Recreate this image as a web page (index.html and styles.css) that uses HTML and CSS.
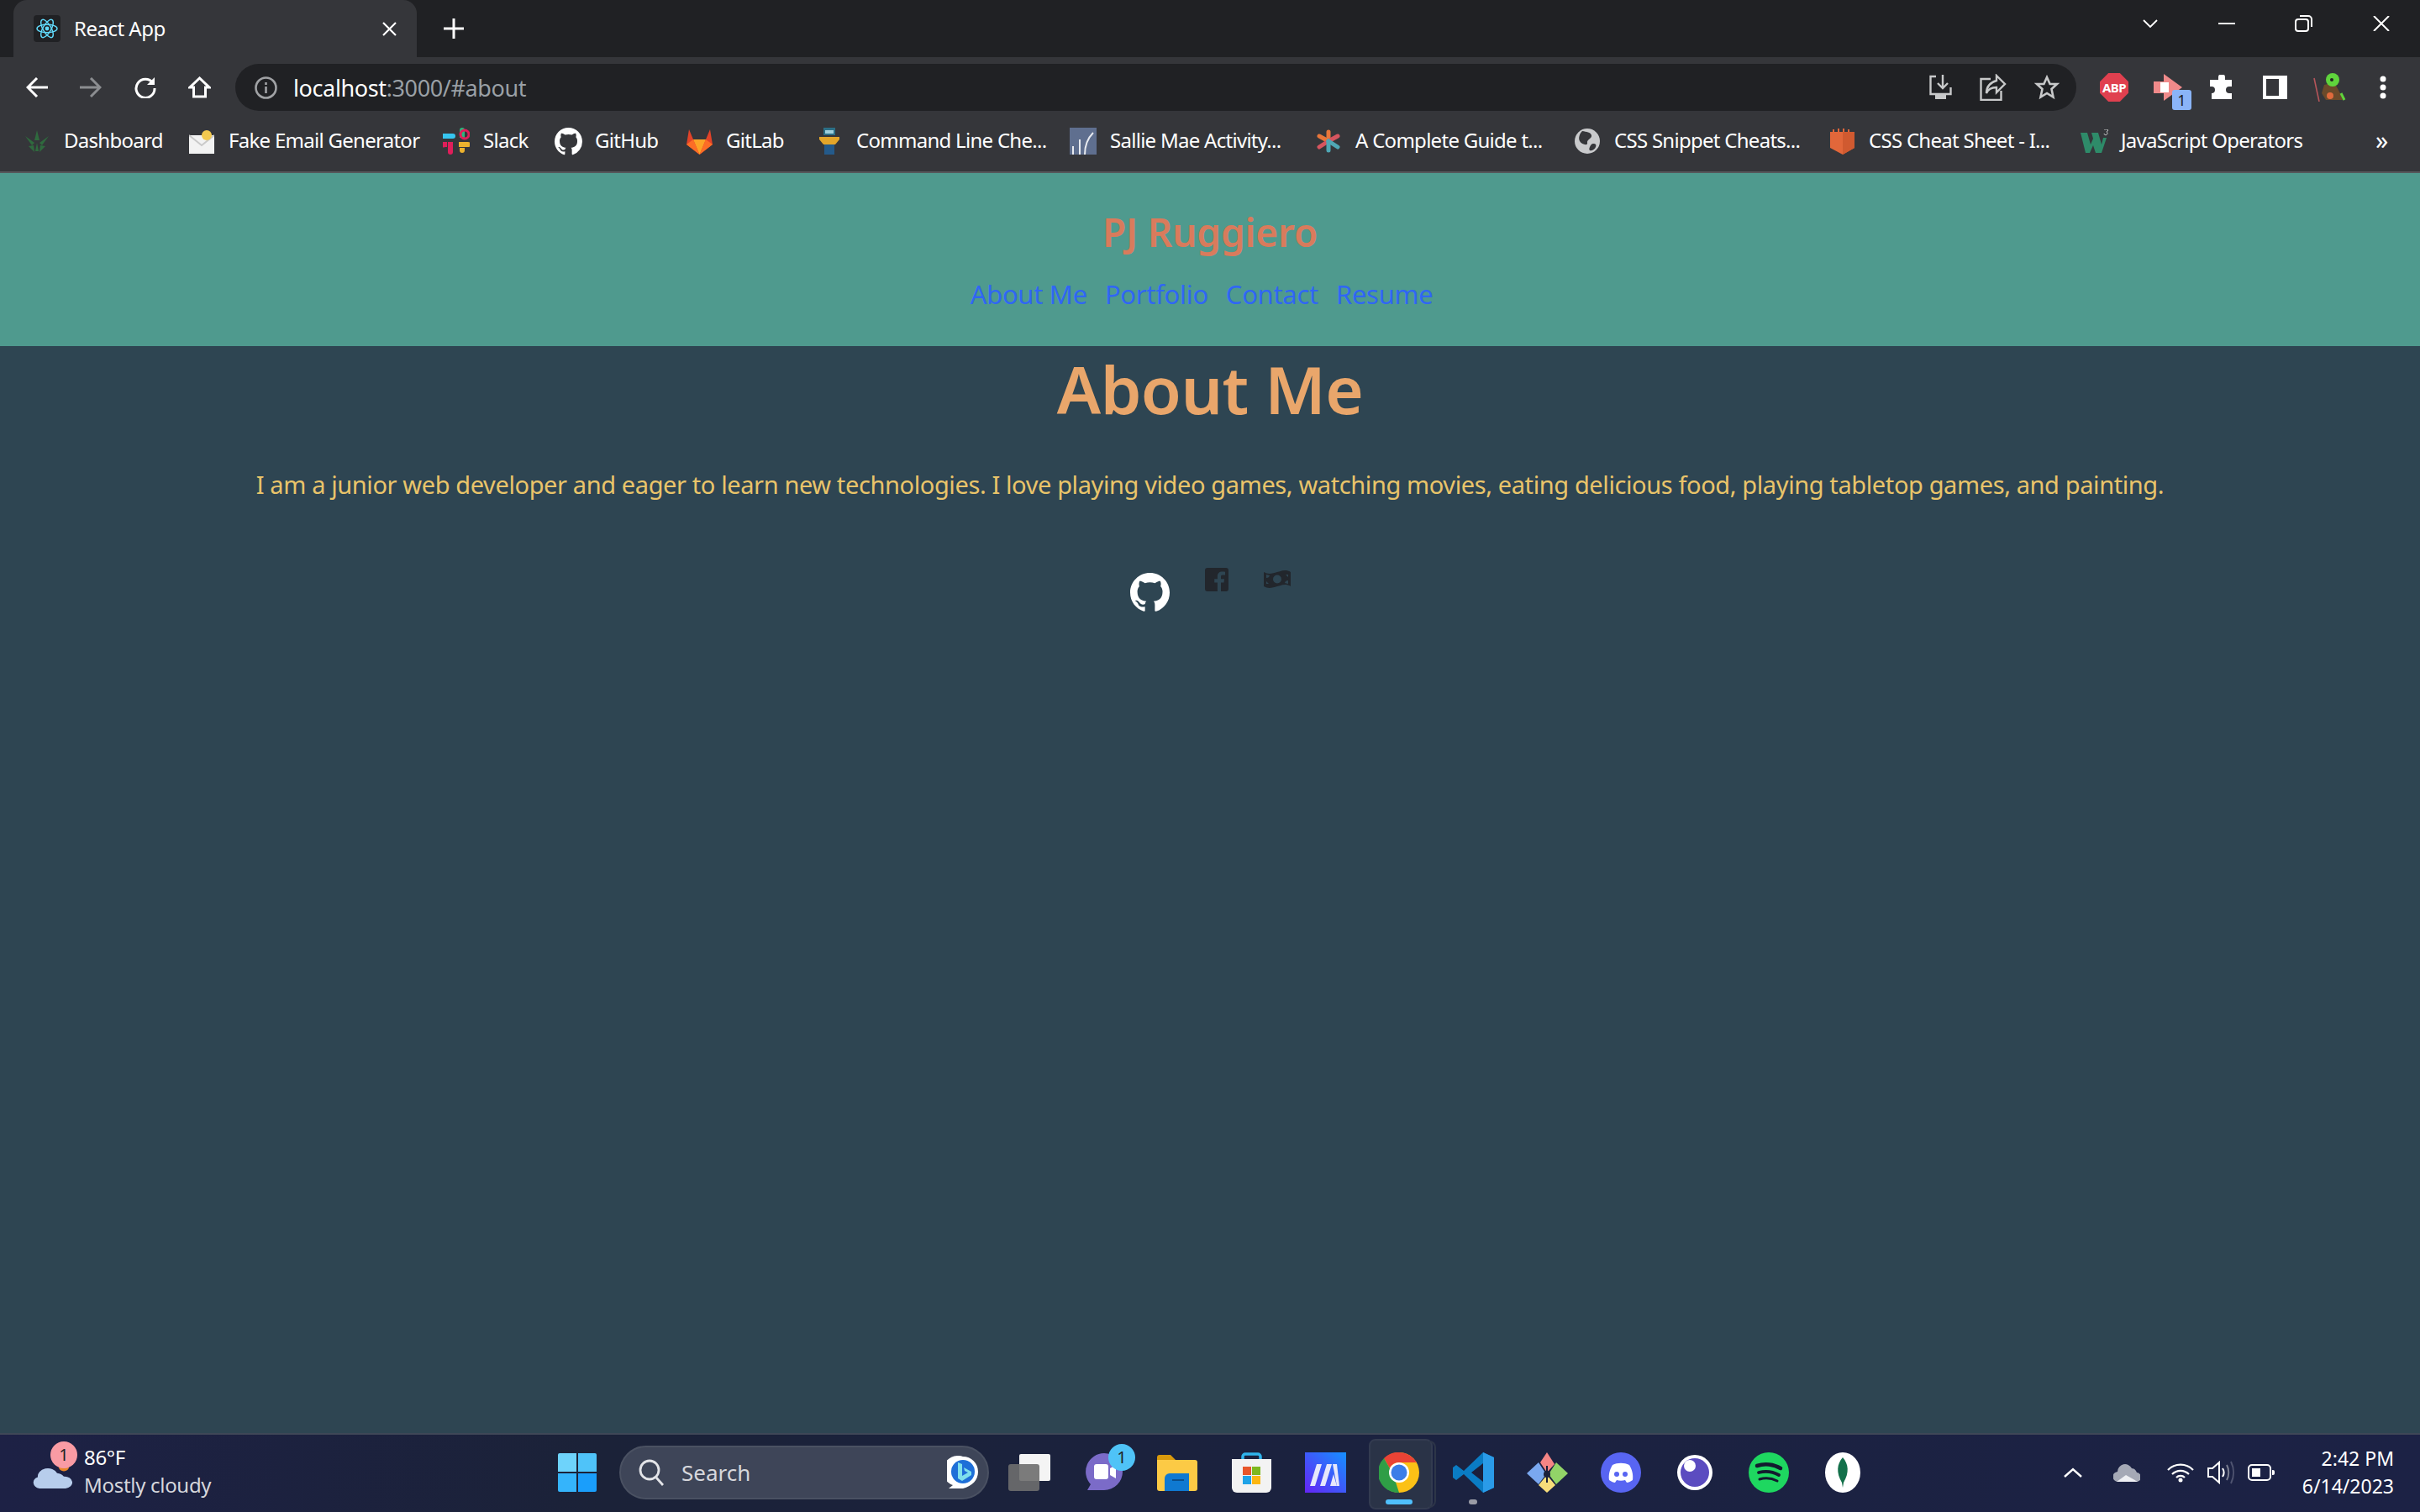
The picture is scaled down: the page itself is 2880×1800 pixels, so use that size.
FILE: index.html
```html
<!DOCTYPE html>
<html lang="en">
  <head>
    <meta charset="UTF-8" />
    <meta name="viewport" content="width=device-width, initial-scale=1.0" />
    <title>React App</title>
    <link rel="stylesheet" href="styles.css">
  </head>
  <body>
    <div class="tabstrip">
      <div class="tab">
        <span class="favicon">
          <svg width="26" height="26" viewBox="0 0 26 26" fill="none" stroke="#61dafb" stroke-width="1.4">
            <ellipse cx="13" cy="13" rx="12" ry="4.8" />
            <ellipse cx="13" cy="13" rx="12" ry="4.8" transform="rotate(60 13 13)" />
            <ellipse cx="13" cy="13" rx="12" ry="4.8" transform="rotate(120 13 13)" />
            <circle cx="13" cy="13" r="2.4" fill="#61dafb" stroke="none" />
          </svg>
        </span>
        <span class="tab-title">React App</span>
        <svg class="tab-close" width="17" height="17" viewBox="0 0 17 17" stroke="#fff" stroke-width="2.2"><path d="M1 1l15 15M16 1L1 16" /></svg>
      </div>
      <svg class="new-tab" width="24" height="24" viewBox="0 0 24 24" stroke="#fff" stroke-width="3"><path d="M12 0v24M0 12h24" /></svg>
      <div class="window-btns">
        <svg class="win-chevron" width="18" height="10" viewBox="0 0 18 10" fill="none" stroke="#fff" stroke-width="1.8"><path d="M1 1l8 8 8-8" /></svg>
        <svg class="win-min" width="20" height="2" viewBox="0 0 20 2" stroke="#fff" stroke-width="2"><path d="M0 1h20" /></svg>
        <svg class="win-restore" width="21" height="20" viewBox="0 0 21 20" fill="none" stroke="#fff" stroke-width="2"><rect x="1" y="5" width="15" height="14" rx="3" /><path d="M6 1h10a4 4 0 014 4v9" /></svg>
        <svg class="win-close" width="20" height="18" viewBox="0 0 20 18" stroke="#fff" stroke-width="2"><path d="M1 0l18 18M19 0L1 18" /></svg>
      </div>
    </div>

    <div class="toolbar">
      <div class="nav-btns">
        <svg width="26" height="24" viewBox="0 0 26 24" fill="none" stroke="#fff" stroke-width="3"><path d="M26 12H3M13 1L2 12l11 11" /></svg>
        <svg width="26" height="24" viewBox="0 0 26 24" fill="none" stroke="#8b8d90" stroke-width="3"><path d="M0 12h23M13 1l11 11-11 11" /></svg>
        <svg width="27" height="26" viewBox="0 0 27 26" fill="none" stroke="#fff" stroke-width="3"><path d="M23 8a11 11 0 10 2 6" /><path d="M25 1v9h-9" fill="#fff" stroke="none" /></svg>
        <svg width="27" height="26" viewBox="0 0 27 26" fill="none" stroke="#fff" stroke-width="3"><path d="M13.500 2L2 13h4.500v11h14V13H25z" /></svg>
      </div>
      <div class="omnibox">
        <svg class="info-icon" width="27" height="27" viewBox="0 0 27 27" fill="none" stroke="#a0a2a5" stroke-width="2.600"><circle cx="13.500" cy="13.500" r="12" /><path d="M13.500 12v8M13.500 7v3" /></svg>
        <span class="url"><span class="url-host">localhost</span>:3000/#about</span>
        <div class="omni-actions">
          <svg width="27" height="32" viewBox="0 0 27 32" fill="none" stroke="#c8c9ca" stroke-width="2.400"><path d="M8 3H1.500v21h24V16M16 1v15M10 11l6 6 6-6" /><path d="M7 25h13v5H7z" fill="#c8c9ca" stroke="none" /></svg>
          <svg width="32" height="32" viewBox="0 0 32 32" fill="none" stroke="#c8c9ca" stroke-width="2.400"><path d="M13 6H1.500v25h24V20" /><path d="M20 2l10 10-10 10v-6c-6 0-10 2-12 7 0-8 5-13 12-15z" /></svg>
          <svg width="30" height="30" viewBox="0 0 30 30" fill="none" stroke="#c8c9ca" stroke-width="2.600"><path d="M15 3l3.600 8h8.400l-6.500 6 2 9.500-7.500-4.500-7.500 4.500 2-9.500-6.500-6h8.400z" /></svg>
        </div>
      </div>
      <div class="ext-btns">
        <span class="ext ext-abp">ABP</span>
        <span class="ext ext-rec">
          <svg width="34" height="32" viewBox="0 0 34 32"><path d="M0 9h12v14H0z" fill="#f08a8a" /><path d="M12 0l22 16-22 16z" fill="#f08a8a" /><path d="M8 10h10v12H8z" fill="#fff" /></svg>
          <span class="ext-badge">1</span>
        </span>
        <svg class="ext" width="30" height="30" viewBox="0 0 30 30" fill="#fff"><path d="M11 3a4 4 0 018 0v3h8v8h-3a4 4 0 000 8h3v7H3v-7a4 4 0 000-8H1V6h10z" /></svg>
        <svg class="ext" width="29" height="28" viewBox="0 0 29 28" fill="none" stroke="#fff" stroke-width="4"><rect x="2" y="2" width="25" height="24" /><path d="M19 2h8v24h-8z" fill="#fff" stroke="none" /></svg>
        <svg class="ext" width="43" height="34" viewBox="0 0 43 34"><path d="M16 14l12-3 8 15 2 6H18l-5-8z" fill="#6b4a2a" /><ellipse cx="26" cy="8" rx="8" ry="8" fill="#5fd43c" /><circle cx="25" cy="8" r="2" fill="#222" /><circle cx="23" cy="27" r="4" fill="#e06a3c" /><path d="M4 6l6 28" stroke="#b5555a" stroke-width="1.600" /><path d="M36 24l4 8" stroke="#5fd43c" stroke-width="3" /></svg>
        <svg class="ext" width="8" height="28" viewBox="0 0 8 28" fill="#fff"><circle cx="4" cy="4" r="3.500" /><circle cx="4" cy="14" r="3.500" /><circle cx="4" cy="24" r="3.500" /></svg>
      </div>
    </div>

    <div class="bookmarks">
      <a class="bm">
        <span class="bm-icon"><svg width="32" height="28" viewBox="0 0 32 28" fill="#2f6a3e"><path d="M16 1l3 12h-6zM2 8l11 8-3 3zM30 8l-11 8 3 3zM6 20l6-1 1 8zM26 20l-6-1-1 8zM16 16l2 10h-4z" /></svg></span>
        <span>Dashboard</span>
      </a>
      <a class="bm">
        <span class="bm-icon"><svg width="30" height="30" viewBox="0 0 30 30"><path d="M0 8h30v22H0z" fill="#f2f2f2" /><path d="M0 8l15 12L30 8" fill="none" stroke="#c9c9c9" stroke-width="2" /><circle cx="21" cy="8" r="6" fill="#f3c94f" /></svg></span>
        <span>Fake Email Generator</span>
      </a>
      <a class="bm">
        <span class="bm-icon"><svg width="32" height="32" viewBox="0 0 32 32">
          <path d="M2 12h11a3 3 0 000-6H2a3 3 0 000 6z" fill="#36c5f0" transform="translate(-1 1)" />
          <path d="M20 3a3 3 0 016 0v9h-6z" fill="#2eb67d" />
          <circle cx="26" cy="8" r="5" fill="none" stroke="#e01e5a" stroke-width="3" />
          <path d="M19 17h11a3 3 0 010 6H19z" fill="#ecb22e" />
          <path d="M20 24h6v3a3 3 0 01-6 0z" fill="#ecb22e" />
          <path d="M6 17h6v12a3 3 0 01-6 0z" fill="#e01e5a" />
          <path d="M0 17h5v6H3a3 3 0 01-3-6z" fill="#e01e5a" />
        </svg></span>
        <span>Slack</span>
      </a>
      <a class="bm">
        <span class="bm-icon"><svg width="33" height="33" viewBox="0 0 16 16" fill="#fff"><use href="#gh-mark" /></svg></span>
        <span>GitHub</span>
      </a>
      <a class="bm">
        <span class="bm-icon"><svg width="33" height="31" viewBox="0 0 33 31"><path d="M16.500 31L1 19 4 1l5 12h15l5-12 3 18z" fill="#e24329" /><path d="M16.500 31L9 13h15z" fill="#fca326" /><path d="M16.500 31L1 19l8-6zM16.500 31L32 19l-8-6z" fill="#fc6d26" /></svg></span>
        <span>GitLab</span>
      </a>
      <a class="bm">
        <span class="bm-icon"><svg width="24" height="32" viewBox="0 0 24 32"><path d="M5 0h14v9H5z" fill="#2c6f86" /><path d="M7 3h10v4H7z" fill="#9fd0dd" /><path d="M0 11h24v3l-5 6H5l-5-6z" fill="#e3a529" /><path d="M6 20h12v12H6z" fill="#245a8a" /></svg></span>
        <span>Command Line Che...</span>
      </a>
      <a class="bm">
        <span class="bm-icon"><svg width="32" height="32" viewBox="0 0 32 32"><path d="M0 0h32v32H0z" fill="#5f6f8f" /><path d="M4 32V22M12 32V14M18 32c0-12 4-20 10-26" fill="none" stroke="#e8ebf0" stroke-width="2" /></svg></span>
        <span>Sallie Mae Activity...</span>
      </a>
      <a class="bm">
        <span class="bm-icon"><svg width="28" height="28" viewBox="0 0 28 28" stroke-width="5" stroke-linecap="round"><path d="M14 3v10" stroke="#e8763a" /><path d="M3 8l11 6" stroke="#e8763a" /><path d="M25 8l-11 6" stroke="#d6555f" /><path d="M3 21l11-7" stroke="#d6555f" /><path d="M25 21l-11-7" stroke="#4fa7b5" /><path d="M14 25V14" stroke="#4fa7b5" /></svg></span>
        <span>A Complete Guide t...</span>
      </a>
      <a class="bm">
        <span class="bm-icon"><svg width="30" height="30" viewBox="0 0 30 30"><circle cx="15" cy="15" r="15" fill="#c9cacc" /><path d="M9 3c5 1 10 1 11 5s-6 5-5 9-7 2-9-2 0-9 3-12zM22 18c3 0 4 1 3 4s-5 5-7 4 1-8 4-8z" fill="#35363a" /></svg></span>
        <span>CSS Snippet Cheats...</span>
      </a>
      <a class="bm">
        <span class="bm-icon"><svg width="29" height="32" viewBox="0 0 29 32"><path d="M0 5h29v19l-14 8-15-8z" fill="#e2673a" /><path d="M15 5h14v19l-14 8z" fill="#d05a30" /><path d="M4 5V2M10 5V1M16 5V1M22 5V2" stroke="#e2673a" stroke-width="2" /></svg></span>
        <span>CSS Cheat Sheet - I...</span>
      </a>
      <a class="bm">
        <span class="bm-icon"><svg width="33" height="28" viewBox="0 0 33 28"><path d="M0 4h8l4 14 3-7-2-7h8l4 14 2-8h4l-6 18h-7l-3-9-4 9H6z" fill="#2e8b69" /><path d="M28 0h5v1l-2 2a2 2 0 11-3 2" fill="none" stroke="#cfd0d0" stroke-width="1" /></svg></span>
        <span>JavaScript Operators</span>
      </a>
      <span class="bm-more">»</span>
    </div>

    <div class="page">
      <header class="site-header">
        <h2 class="site-title">PJ Ruggiero</h2>
        <nav class="site-nav">
          <a href="#about">About Me</a>
          <a href="#portfolio">Portfolio</a>
          <a href="#contact">Contact</a>
          <a href="#resume">Resume</a>
        </nav>
      </header>
      <main class="about">
        <h1>About Me</h1>
        <p>I am a junior web developer and eager to learn new technologies. I love playing video games, watching movies, eating delicious food, playing tabletop games, and painting.</p>
        <div class="socials">
          <svg class="social-gh" width="47" height="47" viewBox="0 0 16 16" fill="#fff">
            <path id="gh-mark" d="M8 0C3.580 0 0 3.580 0 8c0 3.540 2.290 6.530 5.470 7.590.400.070.550-.170.550-.380 0-.190-.010-.820-.010-1.490-2.010.370-2.530-.490-2.690-.940-.090-.230-.480-.940-.820-1.130-.280-.150-.680-.520-.010-.530.630-.010 1.080.580 1.230.820.720 1.210 1.870.870 2.330.660.070-.520.280-.870.510-1.070-1.780-.200-3.640-.890-3.640-3.950 0-.870.310-1.590.820-2.150-.080-.200-.360-1.020.080-2.120 0 0 .670-.210 2.200.820.640-.180 1.320-.270 2-.270.680 0 1.360.090 2 .270 1.530-1.040 2.200-.820 2.200-.820.440 1.100.160 1.920.080 2.120.510.560.820 1.270.820 2.150 0 3.070-1.870 3.750-3.650 3.950.290.250.540.730.540 1.480 0 1.070-.010 1.930-.010 2.200 0 .210.150.460.550.380A8.013 8.013 0 0016 8c0-4.420-3.580-8-8-8z" />
          </svg>
          <svg width="28" height="28" viewBox="0 0 28 28"><path d="M3 0h22a3 3 0 013 3v22a3 3 0 01-3 3h-6V17.500h3.500l.6-4.300H19v-2.600c0-1.300.5-2 2.100-2H24V4.800c-.8-.1-2-.3-3.500-.3-3.300 0-5.600 2-5.600 5.600v3.100h-3.700v4.300h3.700V28H3a3 3 0 01-3-3V3a3 3 0 013-3z" fill="#22262c" /></svg>
          <svg class="social-money" width="32" height="21" viewBox="0 0 32 21"><path fill-rule="evenodd" d="M0 2c5 3 10 2 16 0s11-3 16 0v17c-5-3-10-2-16 0s-11 3-16 0zM16 5.500a5 5 0 100 10 5 5 0 000-10zM3 5v4a4 4 0 004-3zM29 16v-4a4 4 0 00-4 3zM3 16v-3l3 3zM29 5v3l-3-3z" fill="#22262c" /></svg>
        </div>
      </main>
    </div>

    <footer class="taskbar">
      <div class="weather">
        <span class="weather-icon">
          <svg width="48" height="30" viewBox="0 0 48 38" preserveAspectRatio="none"><circle cx="38" cy="6" r="6" fill="#e8862a" /><path d="M9 38a9 9 0 01-2-17 12 12 0 0123-6 11 11 0 018 5 9 9 0 012 18z" fill="#b7cdec" /></svg>
          <span class="weather-badge">1</span>
        </span>
        <div class="weather-text">
          <span class="temp">86°F</span>
          <span class="cond">Mostly cloudy</span>
        </div>
      </div>
      <div class="task-center">
        <svg class="start" width="46" height="46" viewBox="0 0 46 46"><path d="M2 0h20v22H0V2a2 2 0 012-2z" fill="#6ed3fb" /><path d="M24 0h20a2 2 0 012 2v20H24z" fill="#4fc3f9" /><path d="M0 24h22v22H2a2 2 0 01-2-2z" fill="#35b4fb" /><path d="M24 24h22v20a2 2 0 01-2 2H24z" fill="#1a9efb" /></svg>
        <div class="task-search">
          <svg width="30" height="32" viewBox="0 0 30 32" fill="none" stroke="#e3e4e8" stroke-width="2.800"><circle cx="13" cy="13" r="11" /><path d="M21 22l8 9" /></svg>
          <span>Search</span>
          <svg class="bing" width="38" height="40" viewBox="0 0 38 40"><path d="M19 1a18 18 0 0118 18c0 10-7 17-18 20H2l5-4a18 18 0 0112-34z" fill="#fff" /><circle cx="19" cy="19" r="14" fill="#1e6fd8" /><path d="M13 8l5 2v14l7-4-4-2-1-4 9 5v4l-11 7-5-3z" fill="#7fe0ec" /></svg>
        </div>
        <div class="task-apps">
          <span class="app">
            <svg width="50" height="44" viewBox="0 0 50 44"><rect x="13" y="0" width="37" height="32" rx="2" fill="#f4f4f4" /><rect x="0" y="12" width="37" height="32" rx="3" fill="#6e6e6e" fill-opacity=".9" /></svg>
          </span>
          <span class="app">
            <svg width="47" height="46" viewBox="0 0 47 46"><path d="M24 0a22 22 0 010 44H4l4-7A22 22 0 0124 0z" fill="#7b6bc8" /><rect x="12" y="13" width="17" height="18" rx="3" fill="#fff" /><path d="M31 18l7-4v16l-7-4z" fill="#fff" /></svg>
            <span class="app-badge">1</span>
          </span>
          <span class="app">
            <svg width="48" height="43" viewBox="0 0 48 43"><path d="M0 3a3 3 0 013-3h13l6 6H0z" fill="#d99a0c" /><path d="M0 6h45a3 3 0 013 3v31a3 3 0 01-3 3H3a3 3 0 01-3-3z" fill="#fcca45" /><path d="M9 28a6 6 0 016-6h23v21H9z" fill="#0f79d1" /><path d="M18 30h14" stroke="#0a4f8c" stroke-width="2" /></svg>
          </span>
          <span class="app">
            <svg width="47" height="48" viewBox="0 0 47 48"><path d="M13 12V5a3 3 0 013-3h15a3 3 0 013 3v7" fill="none" stroke="#2fb4ec" stroke-width="3.500" /><path d="M0 8h47v34a6 6 0 01-6 6H6a6 6 0 01-6-6z" fill="#f3f3f3" /><path d="M13 17h10v10H13z" fill="#e8562a" /><path d="M24 17h10v10H24z" fill="#7eb81f" /><path d="M13 28h10v10H13z" fill="#1fa3e8" /><path d="M24 28h10v10H24z" fill="#fcb713" /></svg>
          </span>
          <span class="app">
            <svg width="49" height="48" viewBox="0 0 49 48"><defs><linearGradient id="mail-grad" x1="1" y1="0" x2="0" y2="1"><stop offset="0" stop-color="#1590ff" /><stop offset="1" stop-color="#6524f5" /></linearGradient></defs><rect width="49" height="48" fill="url(#mail-grad)" /><path d="M6 40l8-26h6l-8 26zM18 40l8-26h6l-8 26zM30 40l4-14 4 14z" fill="#e6e8fb" /><path d="M33 14h5l3 26h-3z" fill="#e6e8fb" /></svg>
          </span>
          <span class="app app-active">
            <svg width="48" height="48" viewBox="0 0 48 48"><circle cx="24" cy="24" r="24" fill="#fbc116" /><path d="M24 0a24 24 0 0121 12H24a12 12 0 00-11 7L6 7A24 24 0 0124 0z" fill="#ea4335" /><path d="M6 7l11 19 7 22A24 24 0 016 7z" fill="#2f9e46" /><circle cx="24" cy="24" r="12" fill="#fff" /><circle cx="24" cy="24" r="9.500" fill="#3b7de8" /></svg>
            <span class="app-underline"></span>
          </span>
          <span class="app">
            <svg width="49" height="48" viewBox="0 0 49 48"><path d="M36 0l13 6v36l-13 6L13 26 4 33l-4-3V18l4-3 9 7z" fill="#0a7cc4" /><path d="M36 0l13 6v36l-13 6z" fill="#2a9be8" /><path d="M36 13L22 24l14 11z" fill="#1b1f3a" /></svg>
            <span class="app-dot"></span>
          </span>
          <span class="app">
            <svg width="49" height="48" viewBox="0 0 49 48"><path d="M24 0l9 14-9 10-8-12z" fill="#f58585" /><path d="M35 12l14 13-14 13-9-12z" fill="#92d468" /><path d="M14 12L0 25l14 13 9-12z" fill="#7aa8f0" /><path d="M24 27l10 12-10 9-10-9z" fill="#f7dd7a" /><circle cx="24" cy="26" r="4" fill="#1b1f3a" /><path d="M24 16v20" stroke="#1b1f3a" stroke-width="2" /></svg>
          </span>
          <span class="app">
            <svg width="48" height="48" viewBox="0 0 48 48"><circle cx="24" cy="24" r="24" fill="#5865f2" /><path d="M14 15c6-3 14-3 20 0 3 5 5 11 4 18-3 2-5 3-7 3l-2-3c-3 1-7 1-10 0l-2 3c-2 0-4-1-7-3-1-7 1-13 4-18z" fill="#fff" /><circle cx="19" cy="26" r="3" fill="#5865f2" /><circle cx="29" cy="26" r="3" fill="#5865f2" /></svg>
          </span>
          <span class="app">
            <svg width="42" height="42" viewBox="0 0 42 42"><circle cx="21" cy="21" r="21" fill="#fff" /><circle cx="21" cy="21" r="17" fill="#5b4cc0" /><circle cx="15" cy="13" r="7" fill="#fff" /></svg>
          </span>
          <span class="app">
            <svg width="48" height="48" viewBox="0 0 48 48" fill="none" stroke="#131a2e" stroke-linecap="round"><circle cx="24" cy="24" r="24" fill="#1ed760" stroke="none" /><path d="M10 16c9-3 20-2 28 3" stroke-width="4.500" /><path d="M12 24c8-2 17-1 24 3" stroke-width="3.800" /><path d="M13 32c7-2 15-1 21 2" stroke-width="3" /></svg>
          </span>
          <span class="app">
            <svg width="42" height="48" viewBox="0 0 42 48"><ellipse cx="21" cy="24" rx="21" ry="24" fill="#fff" /><path d="M21 6c7 8 8 18 1 30l-1 6-1-6C13 24 14 14 21 6z" fill="#13704a" /></svg>
          </span>
        </div>
      </div>
      <div class="tray">
        <svg class="tray-chevron" width="22" height="12" viewBox="0 0 22 12" fill="none" stroke="#fff" stroke-width="2.400"><path d="M1 11L11 2l10 9" /></svg>
        <svg class="tray-cloud" width="32" height="21" viewBox="0 0 32 21"><path d="M6 21a6 6 0 01-1-12 9 9 0 0117-4 7 7 0 016 5 5.500 5.500 0 01-1 11z" fill="#a5a9b6" /><path d="M4 21l11-8 14 8z" fill="#eeeff3" /></svg>
        <svg class="tray-wifi" width="32" height="24" viewBox="0 0 32 24" fill="none" stroke="#fff" stroke-width="2.200"><path d="M1 9a21 21 0 0130 0M6 14a14 14 0 0120 0M11 18a7 7 0 0110 0" /><circle cx="16" cy="21" r="2.500" fill="#fff" stroke="none" /></svg>
        <svg class="tray-sound" width="32" height="28" viewBox="0 0 32 28" fill="none" stroke="#fff" stroke-width="2"><path d="M1 9h5l8-7v24l-8-7H1z" /><path d="M18 9c2 3 2 7 0 10" /><path d="M23 5c3 5 3 13 0 18" stroke="#7b7f92" /><path d="M28 1c4 8 4 18 0 26" stroke="#4f5470" /></svg>
        <svg class="tray-battery" width="32" height="20" viewBox="0 0 32 20" fill="none" stroke="#fff" stroke-width="2"><rect x="1" y="1" width="26" height="18" rx="4" /><rect x="5" y="5" width="10" height="10" fill="#fff" stroke="none" /><path d="M29 7h1a2 2 0 012 2v2a2 2 0 01-2 2h-1z" fill="#fff" stroke="none" /></svg>
        <div class="clock">
          <span>2:42 PM</span>
          <span>6/14/2023</span>
        </div>
      </div>
    </footer>
  </body>
</html>
```

FILE: styles.css
```css
* {
  margin: 0;
  padding: 0;
  box-sizing: border-box;
}
body {
  width: 2880px;
  height: 1800px;
  display: flex;
  flex-direction: column;
  overflow: hidden;
  font-family: "Noto Sans", "Open Sans", sans-serif;
  background-color: #2e4552;
  color: #ffffff;
}
svg {
  display: block;
  flex-shrink: 0;
}

/* browser chrome */
.tabstrip {
  height: 68px;
  background-color: #202124;
  display: flex;
  align-items: flex-start;
  padding-left: 16px;
}
.tab {
  width: 480px;
  height: 68px;
  background-color: #35363a;
  border-radius: 16px 16px 0 0;
  display: flex;
  align-items: center;
  padding: 0 24px;
}
.favicon {
  width: 32px;
  height: 32px;
  background-color: #202124;
  border-radius: 4px;
  display: flex;
  align-items: center;
  justify-content: center;
  margin-right: 16px;
}
.tab-title {
  font-size: 24px;
  letter-spacing: -0.5px;
  margin-bottom: 2px;
}
.tab-close {
  margin-left: auto;
}
.new-tab {
  margin: 22px 0 0 32px;
}
.window-btns {
  margin-left: auto;
  display: flex;
  align-items: center;
  height: 56px;
  padding-right: 36px;
}
.win-min {
  margin-left: 72px;
}
.win-restore {
  margin-left: 71px;
}
.win-close {
  margin-left: 72px;
}

.toolbar {
  height: 64px;
  background-color: #35363a;
  display: flex;
  align-items: flex-end;
}
.nav-btns {
  width: 280px;
  height: 56px;
  display: flex;
  align-items: center;
  padding-left: 31px;
  gap: 38px;
}
.omnibox {
  width: 2191px;
  height: 56px;
  background-color: #202124;
  border-radius: 28px;
  display: flex;
  align-items: center;
  padding: 0 20px 0 23px;
}
.info-icon {
  margin-right: 19px;
}
.url {
  font-size: 27px;
  letter-spacing: -0.38px;
  color: #9aa0a6;
}
.url-host {
  color: #ffffff;
}
.omni-actions {
  margin-left: auto;
  display: flex;
  align-items: center;
  gap: 33px;
}
.ext-btns {
  flex: 1;
  height: 56px;
  display: flex;
  align-items: center;
  padding-left: 28px;
}
.ext-abp {
  width: 34px;
  height: 34px;
  background-color: #e0404f;
  clip-path: polygon(30% 0, 70% 0, 100% 30%, 100% 70%, 70% 100%, 30% 100%, 0 70%, 0 30%);
  font-size: 15px;
  font-weight: 700;
  letter-spacing: -0.5px;
  display: flex;
  align-items: center;
  justify-content: center;
}
.ext-rec {
  position: relative;
  margin-left: 30px;
}
.ext-badge {
  position: absolute;
  left: 22px;
  top: 19px;
  width: 23px;
  height: 24px;
  background-color: #8ab4f8;
  border-radius: 3px;
  color: #202124;
  font-size: 18px;
  line-height: 24px;
  text-align: center;
}
.ext-btns > svg:nth-child(3) {
  margin-left: 32px;
}
.ext-btns > svg:nth-child(4) {
  margin-left: 34px;
}
.ext-btns > svg:nth-child(5) {
  margin-left: 28px;
}
.ext-btns > svg:nth-child(6) {
  margin-left: 39px;
}

.bookmarks {
  height: 74px;
  background-color: #35363a;
  border-bottom: 2px solid #55575a;
  display: grid;
  grid-template-columns: 196px 303px 133px 156px 155px 302px 292px 308px 303px 300px 351px 30px;
  align-items: center;
  padding-left: 28px;
  font-size: 24px;
  letter-spacing: -0.72px;
}
.bm {
  display: flex;
  align-items: center;
  gap: 16px;
  white-space: nowrap;
}
.bm > span:last-child {
  margin-bottom: 3px;
}
.bm-icon {
  width: 32px;
  display: flex;
  justify-content: center;
}
.bm-more {
  font-size: 30px;
  margin-bottom: 3px;
}

/* the page itself */
.page {
  flex: 1;
  display: flex;
  flex-direction: column;
}
.site-header {
  height: 206px;
  background-color: #4f9a8e;
  display: flex;
  flex-direction: column;
  align-items: center;
  padding-top: 45px;
}
.site-title {
  font-size: 46px;
  font-weight: 600;
  line-height: 50px;
  letter-spacing: -0.2px;
  color: #d97b5c;
}
.site-nav {
  display: flex;
  gap: 21px;
  margin-top: 27px;
  padding-right: 20px;
  font-size: 31px;
  line-height: 44px;
  letter-spacing: -0.3px;
}
.site-nav a {
  color: #2f66f5;
  text-decoration: none;
}
.about {
  display: flex;
  flex-direction: column;
  align-items: center;
}
.about h1 {
  font-size: 78px;
  font-weight: 600;
  line-height: 106px;
  margin-top: -2px;
  letter-spacing: -0.6px;
  color: #e9a66b;
}
.about p {
  font-size: 29px;
  line-height: 44px;
  margin-top: 39px;
  letter-spacing: -0.39px;
  color: #e9c46a;
}
.socials {
  display: flex;
  align-items: flex-start;
  gap: 42px;
  margin-top: 77px;
}
.social-gh {
  margin-top: 6px;
}
.social-money {
  margin-top: 3px;
}

/* windows taskbar */
.taskbar {
  height: 94px;
  border-top: 2px solid #3f4757;
  background: linear-gradient(90deg, #1d2145 0%, #1b2238 25%, #1b2240 60%, #1c2245 100%);
  display: flex;
  align-items: center;
  padding-bottom: 2px;
  position: relative;
}
.weather {
  width: 664px;
  display: flex;
  align-items: center;
  padding-left: 38px;
}
.weather-icon {
  position: relative;
  width: 48px;
  height: 30px;
  margin-top: 8px;
}
.weather-badge {
  position: absolute;
  left: 22px;
  top: -26px;
  width: 32px;
  height: 32px;
  border-radius: 50%;
  background-color: #f99ba4;
  color: #202124;
  font-size: 20px;
  line-height: 32px;
  text-align: center;
}
.weather-text {
  display: flex;
  flex-direction: column;
  margin-left: 14px;
  margin-bottom: 5px;
  font-size: 24px;
  line-height: 33px;
  letter-spacing: -0.3px;
}
.cond {
  color: #d6d7dc;
}
.task-center {
  display: flex;
  align-items: center;
}
.task-search {
  width: 440px;
  height: 64px;
  margin-left: 27px;
  background-color: #3e4558;
  border: 2px solid #4a5162;
  border-radius: 32px;
  display: flex;
  align-items: center;
  padding: 0 10px 0 21px;
  font-size: 26px;
  color: #d6d7dc;
}
.task-search span {
  margin-left: 21px;
}
.bing {
  margin-left: auto;
}
.task-apps {
  display: flex;
  margin-left: 4px;
}
.app {
  position: relative;
  width: 88px;
  height: 80px;
  display: flex;
  align-items: center;
  justify-content: center;
}
.app svg {
  position: relative;
}
.app-active::before {
  content: "";
  position: absolute;
  left: 8px;
  top: 0;
  width: 72px;
  height: 80px;
  background-color: #2a3347;
  border: 2px solid #333b50;
  border-radius: 8px;
}
.app-active::after {
  content: "";
  position: absolute;
  left: 80px;
  top: 2px;
  width: 6px;
  height: 76px;
  border: 2px solid #2d3548;
  border-left: 0;
  border-radius: 0 8px 8px 0;
}
.app-badge {
  position: absolute;
  left: 50px;
  top: 6px;
  width: 32px;
  height: 32px;
  border-radius: 50%;
  background-color: #4fc3f7;
  color: #202124;
  font-size: 20px;
  line-height: 32px;
  text-align: center;
}
.app-underline {
  position: absolute;
  left: 28px;
  bottom: 2px;
  width: 32px;
  height: 6px;
  border-radius: 3px;
  background-color: #4fc0fb;
}
.app-dot {
  position: absolute;
  left: 39px;
  bottom: 2px;
  width: 10px;
  height: 6px;
  border-radius: 3px;
  background-color: #9a9ca6;
}
.tray {
  position: absolute;
  right: 31px;
  top: 0;
  bottom: 0;
  display: flex;
  align-items: center;
  padding-bottom: 2px;
}
.tray-cloud {
  margin-left: 37px;
}
.tray-wifi {
  margin-left: 32px;
}
.tray-sound {
  margin-left: 16px;
}
.tray-battery {
  margin-left: 16px;
}
.clock {
  width: 142px;
  display: flex;
  flex-direction: column;
  align-items: flex-end;
  font-size: 23px;
  line-height: 33px;
}
```
